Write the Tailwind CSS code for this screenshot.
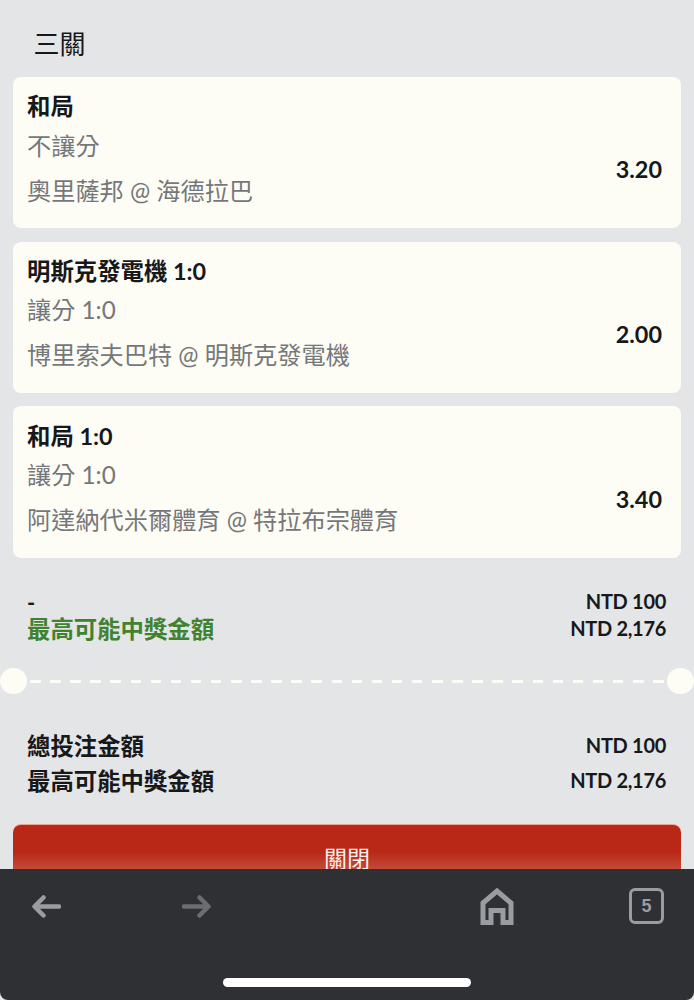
<!DOCTYPE html>
<html lang="zh-Hant">

<head>
    <meta charset="UTF-8">
    <meta name="viewport" content="width=device-width, initial-scale=1.0">
    <title>三關</title>
    <script src="https://cdn.jsdelivr.net/npm/@tailwindcss/browser@4"></script>
</head>

<body class="bg-[#e3e5e7]">
    <div class="relative h-[1000px] w-[694px] overflow-hidden bg-[#e3e5e7] font-['Lato','Noto_Sans_CJK_TC',sans-serif] text-[#17181a]">

        <h1 class="pl-[33.500px] pt-[25.500px] text-[26px] leading-[36px] font-normal">三關</h1>

        <div class="mx-[13px] mt-[15.500px] flex flex-col gap-[13.500px]">
            <div class="flex h-[151px] items-center justify-between rounded-lg bg-[#fdfdf5] pl-[14px] pr-[19px]">
                <div class="-mt-[8px]">
                    <p class="text-[23.4px] leading-[30px] font-bold">和局</p>
                    <p class="mt-[9.500px] text-[24.2px] leading-[30px] text-[#75777a]">不讓分</p>
                    <p class="mt-[15px] text-[24.2px] leading-[30px] text-[#75777a]">奧里薩邦 @ 海德拉巴</p>
                </div>
                <span class="mt-[35px] text-[23.4px] font-bold">3.20</span>
            </div>
            <div class="flex h-[151px] items-center justify-between rounded-lg bg-[#fdfdf5] pl-[14px] pr-[19px]">
                <div class="-mt-[8px]">
                    <p class="text-[23.4px] leading-[30px] font-bold">明斯克發電機 1:0</p>
                    <p class="mt-[9.500px] text-[24.2px] leading-[30px] text-[#75777a]">讓分 1:0</p>
                    <p class="mt-[15px] text-[24.2px] leading-[30px] text-[#75777a]">博里索夫巴特 @ 明斯克發電機</p>
                </div>
                <span class="mt-[35px] text-[23.4px] font-bold">2.00</span>
            </div>
            <div class="flex h-[152px] items-center justify-between rounded-lg bg-[#fdfdf5] pl-[14px] pr-[19px]">
                <div class="-mt-[8px]">
                    <p class="text-[23.4px] leading-[30px] font-bold">和局 1:0</p>
                    <p class="mt-[9.500px] text-[24.2px] leading-[30px] text-[#75777a]">讓分 1:0</p>
                    <p class="mt-[15px] text-[24.2px] leading-[30px] text-[#75777a]">阿達納代米爾體育 @ 特拉布宗體育</p>
                </div>
                <span class="mt-[35px] text-[23.4px] font-bold">3.40</span>
            </div>
        </div>

        <div class="ml-[27px] mr-[28px] mt-[31px] flex justify-between font-bold">
            <div>
                <p class="text-[22px] leading-[27px]">-</p>
                <p class="text-[23.4px] leading-[27px] text-[#3f8230]">最高可能中獎金額</p>
            </div>
            <div class="-mt-[1px] text-right text-[20px] leading-[27px] tracking-[-0.3px]">
                <p>NTD 100</p>
                <p>NTD 2,176</p>
            </div>
        </div>

        <div class="mt-[25px] flex h-[26px] items-center">
            <span class="h-[26px] w-[27px] shrink-0 rounded-full bg-[#fdfdf5]"></span>
            <span class="mx-[3px] h-[3px] flex-1 bg-[repeating-linear-gradient(90deg,#fdfdf5_0,#fdfdf5_10.500px,transparent_10.500px,transparent_20.100px)]"></span>
            <span class="h-[26px] w-[27px] shrink-0 rounded-full bg-[#fdfdf5]"></span>
        </div>

        <div class="ml-[27px] mr-[28px] mt-[38px] flex flex-col gap-[7px] font-bold">
            <div class="flex items-center justify-between leading-[28px]">
                <span class="text-[23.4px]">總投注金額</span>
                <span class="-mt-[2px] text-[20px] tracking-[-0.3px]">NTD 100</span>
            </div>
            <div class="flex items-center justify-between leading-[28px]">
                <span class="text-[23.4px]">最高可能中獎金額</span>
                <span class="-mt-[2px] text-[20px] tracking-[-0.3px]">NTD 2,176</span>
            </div>
        </div>

        <button class="mx-[13px] mt-[29px] block h-[66px] w-[668px] rounded-lg border-t border-[#e8a594] bg-[linear-gradient(#b92817_0,#b92817_27px,#c34a38_44px)] text-[23px] leading-[64px] text-[#f7f1ec]">關閉</button>

        <!-- browser toolbar, sits over the page -->
        <div class="absolute inset-x-0 bottom-0 h-[131px] rounded-b-lg bg-[#2f3033]">
            <div class="flex items-start pl-[31px] pt-[19px]">
                <svg class="mt-[6px] h-[25px] w-[30px]" viewBox="0 0 30 25" fill="none" stroke="#9a9ca1" stroke-width="4.500" stroke-linecap="round" stroke-linejoin="round">
                    <path d="M28 12.500H4M12.500 3.500 3.500 12.500l9 9" />
                </svg>
                <svg class="ml-[121px] mt-[6px] h-[25px] w-[30px]" viewBox="0 0 30 25" fill="none" stroke="#6b6d71" stroke-width="4.500" stroke-linecap="round" stroke-linejoin="round">
                    <path d="M2 12.500H26M17.500 3.500l9 9-9 9" />
                </svg>
                <svg class="ml-[268px] h-[37px] w-[34px]" viewBox="0 0 34 37" fill="none" stroke="#9a9ca1" stroke-width="5">
                    <path d="M3 34.500V15L17 3l14 12v19.500h-8V22.500H11V34.500z" />
                </svg>
                <div class="ml-[115px] flex h-[36px] w-[35px] items-center justify-center rounded-[6px] border-[3px] border-[#9a9ca1] font-['Liberation_Sans',sans-serif] text-[18px] font-bold text-[#9a9ca1]">5</div>
            </div>
            <div class="absolute bottom-[13px] left-[223px] h-[9px] w-[248px] rounded-full bg-white"></div>
        </div>
    </div>
</body>

</html>
